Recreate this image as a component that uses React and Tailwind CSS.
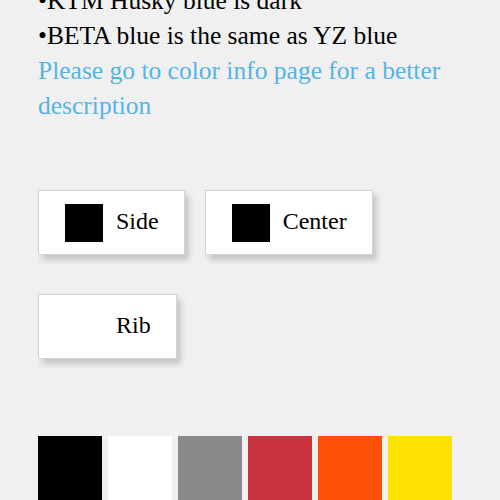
const swatches = ["#000000", "#ffffff", "#898a8c", "#c8323c", "#ff5106", "#fce102"];

function Chip({ label, color }) {
  return (
    <div className="flex items-center gap-[13px] h-[65px] pl-[26px] pr-[25px] bg-white border border-[#d4d4d4] shadow-[4px_5px_6px_rgba(0,0,0,0.18)]">
      <div className="w-[38px] h-[38px]" style={{ background: color }} />
      <span className="text-[24px] leading-none text-black -mt-[3px]">{label}</span>
    </div>
  );
}

export default function App() {
  return (
    <div className="w-[500px] h-[500px] overflow-hidden bg-[#f0f0f0] pl-[38px] font-['Liberation_Serif',serif]">
      <div className="-mt-[17px] text-[25.5px] leading-[35px]">
        <p className="text-black">•KTM Husky blue is dark</p>
        <p className="text-black">•BETA blue is the same as YZ blue</p>
        <p className="text-[#55b4e6] pr-[20px]">Please go to color info page for a better description</p>
      </div>

      <div className="mt-[67px] flex gap-[20px]">
        <Chip label="Side" color="#000000" />
        <Chip label="Center" color="#000000" />
      </div>
      <div className="mt-[39px] flex">
        <Chip label="Rib" color="#ffffff" />
      </div>

      <div className="mt-[77px] flex gap-[6px]">
        {swatches.map((c) => (
          <div key={c} className="w-[64px] h-[80px]" style={{ background: c }} />
        ))}
      </div>
    </div>
  );
}
